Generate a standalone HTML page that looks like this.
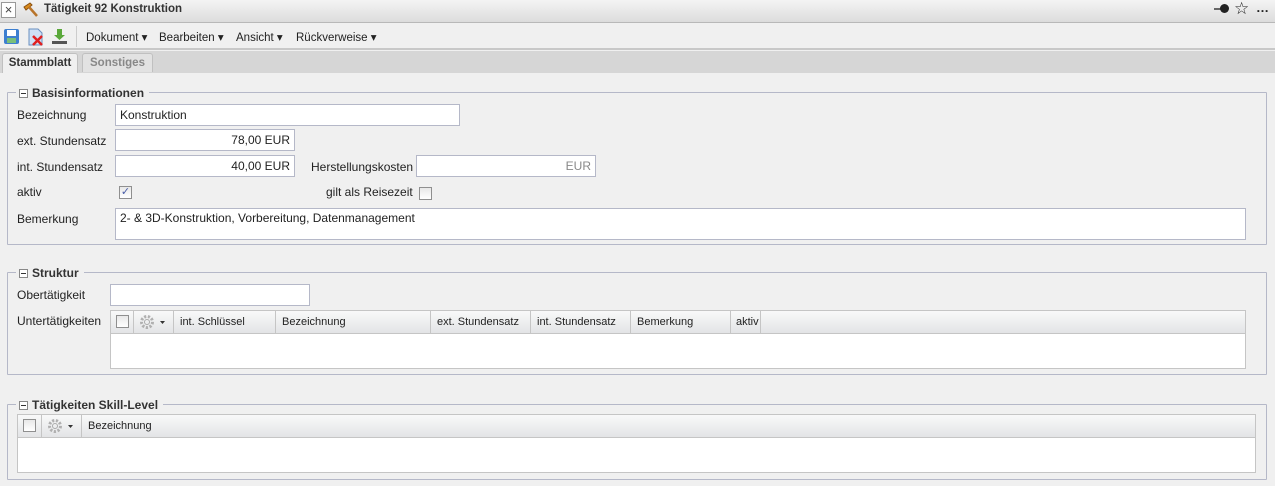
<!DOCTYPE html>
<html><head><meta charset="utf-8"><style>
*{box-sizing:border-box;margin:0;padding:0}
body{width:1275px;height:486px;overflow:hidden;background:#f0f0f0;font-family:"Liberation Sans",sans-serif;font-size:12px;color:#222;position:relative}
.a{position:absolute}
.inp{position:absolute;background:#fff;border:1px solid #b5b8c8;height:22px;padding:3px 4px;font-size:12px}
.r{text-align:right}
.fs{position:absolute;border:1px solid #b5b8c8;border-radius:1px}
.lg{position:absolute;top:-8px;left:8px;background:#f0f0f0;padding:0 5px 0 3px;font-weight:bold;font-size:12px;color:#333;height:16px;line-height:16px}
.lg i{display:inline-block;width:9px;height:9px;border:1px solid #888;vertical-align:-1px;margin-right:4px;position:relative;background:#fff}
.lg i:after{content:"";position:absolute;left:1px;top:3px;width:5px;height:1px;background:#333}
.cb{position:absolute;width:13px;height:13px;border:1px solid #8f8f8f;background:linear-gradient(#e8e8e8,#fff)}
.grid{position:absolute;background:#fff;border:1px solid #c5c5c5}
.gh{position:absolute;left:0;right:0;top:0;height:23px;background:linear-gradient(#f9f9f9,#e3e4e6);border-bottom:1px solid #c5c5c5}
.gh div{position:absolute;top:0;height:22px;line-height:22px;border-right:1px solid #c5c5c5;padding-left:6px;font-size:11px}
.gh svg{position:absolute;left:5px;top:3px}
</style></head><body>
<div class="a" style="left:0;top:0;width:1275px;height:23px;background:linear-gradient(#f4f4f4,#dcdcdc);border-bottom:1px solid #b8b8b8"></div>
<div class="a" style="left:1px;top:2px;width:15px;height:16px;border:1px solid #999;background:#fff;font-size:13px;line-height:13px;text-align:center;color:#444">×</div>
<svg class="a" style="left:21px;top:2px" width="18" height="17"><path d="M3 5 L9 1 L11 3 L5 8Z" fill="#d98a1a" stroke="#8a5010"/><path d="M8 5 L16 14" stroke="#b8742a" stroke-width="2.5"/></svg>
<div class="a" style="left:44px;top:3px;font-weight:bold;font-size:11.5px;color:#333">Tätigkeit 92 Konstruktion</div>
<div class="a" style="left:1214px;top:4px;width:16px;height:10px"><div class="a" style="left:0;top:4px;width:8px;height:2px;background:#666"></div><div class="a" style="left:6px;top:0;width:9px;height:9px;border-radius:50%;background:#222"></div></div>
<div class="a" style="left:1234px;top:-1px;font-size:17px">☆</div>
<div class="a" style="left:1256px;top:0px;font-size:13px;font-weight:bold">…</div>

<div class="a" style="left:0;top:23px;width:1275px;height:27px;background:#f0f0f0;border-bottom:2px solid #c8c8c8"></div>
<svg class="a" style="left:3px;top:28px" width="17" height="17"><rect x="1" y="1" width="15" height="15" rx="2" fill="#3d7fd0"/><rect x="4" y="2" width="9" height="6" fill="#fff"/><rect x="4" y="10" width="9" height="5" fill="#7ac07a"/></svg>
<svg class="a" style="left:27px;top:28px" width="18" height="18"><path d="M2 1h9l4 4v12H2z" fill="#cfe0f5" stroke="#6a8fc0"/><path d="M6 8l9 9M15 8l-9 9" stroke="#e02020" stroke-width="2.5"/></svg>
<svg class="a" style="left:51px;top:28px" width="17" height="17"><path d="M6 1h5v6h3l-5.5 5L3 7h3z" fill="#5aa83a"/><rect x="1" y="13" width="15" height="3" fill="#555"/></svg>
<div class="a" style="left:76px;top:26px;width:1px;height:21px;background:#ccc"></div>
<div class="a" style="left:86px;top:30px;font-size:11.5px">Dokument ▾</div>
<div class="a" style="left:159px;top:30px;font-size:11.5px">Bearbeiten ▾</div>
<div class="a" style="left:236px;top:30px;font-size:11.5px">Ansicht ▾</div>
<div class="a" style="left:296px;top:30px;font-size:11.5px">Rückverweise ▾</div>

<div class="a" style="left:0;top:51px;width:1275px;height:22px;background:#d6d6d6"></div>
<div class="a" style="left:2px;top:53px;width:76px;height:20px;background:#f0f0f0;border:1px solid #c0c0c0;border-bottom:none;border-radius:3px 3px 0 0;font-weight:bold;font-size:11.5px;text-align:center;line-height:18px;color:#333">Stammblatt</div>
<div class="a" style="left:82px;top:53px;width:71px;height:19px;background:#e2e2e2;border:1px solid #c0c0c0;border-bottom:none;border-radius:3px 3px 0 0;font-weight:bold;font-size:11.5px;text-align:center;line-height:18px;color:#888">Sonstiges</div>

<div class="fs" style="left:7px;top:92px;width:1260px;height:153px"><div class="lg"><i></i>Basisinformationen</div></div>
<div class="a" style="left:17px;top:108px">Bezeichnung</div>
<div class="inp" style="left:115px;top:104px;width:345px">Konstruktion</div>
<div class="a" style="left:17px;top:134px">ext. Stundensatz</div>
<div class="inp r" style="left:115px;top:129px;width:180px">78,00 EUR</div>
<div class="a" style="left:17px;top:160px">int. Stundensatz</div>
<div class="inp r" style="left:115px;top:155px;width:180px">40,00 EUR</div>
<div class="a" style="left:311px;top:160px">Herstellungskosten</div>
<div class="inp r" style="left:416px;top:155px;width:180px;color:#888">EUR</div>
<div class="a" style="left:17px;top:185px">aktiv</div>
<div class="cb" style="left:119px;top:186px;color:#4a5ea8;font-size:11px;line-height:11px;text-align:center">✓</div>
<div class="a" style="left:326px;top:185px">gilt als Reisezeit</div>
<div class="cb" style="left:419px;top:187px"></div>
<div class="a" style="left:17px;top:212px">Bemerkung</div>
<div class="inp" style="left:115px;top:208px;width:1131px;height:32px;padding-top:2px">2- &amp; 3D-Konstruktion, Vorbereitung, Datenmanagement</div>

<div class="fs" style="left:7px;top:272px;width:1260px;height:103px"><div class="lg"><i></i>Struktur</div></div>
<div class="a" style="left:17px;top:288px">Obertätigkeit</div>
<div class="inp" style="left:110px;top:284px;width:200px"></div>
<div class="a" style="left:17px;top:314px">Untertätigkeiten</div>
<div class="grid" style="left:110px;top:310px;width:1136px;height:59px"><div class="gh">
<div style="left:0;width:23px"><span class="cb" style="left:5px;top:4px"></span></div>
<div style="left:23px;width:40px"><svg width="30" height="16"><circle cx="8" cy="8" r="5.5" fill="none" stroke="#b0b0b0" stroke-width="3" stroke-dasharray="2.2 1.6"/><circle cx="8" cy="8" r="2.5" fill="none" stroke="#aaa"/><path d="M21 7h5l-2.5 3z" fill="#333"/></svg></div>
<div style="left:63px;width:102px">int. Schlüssel</div>
<div style="left:165px;width:155px">Bezeichnung</div>
<div style="left:320px;width:100px">ext. Stundensatz</div>
<div style="left:420px;width:100px">int. Stundensatz</div>
<div style="left:520px;width:100px">Bemerkung</div>
<div style="left:620px;width:30px;padding-left:5px">aktiv</div>
</div></div>

<div class="fs" style="left:7px;top:404px;width:1260px;height:76px"><div class="lg"><i></i>Tätigkeiten Skill-Level</div></div>
<div class="grid" style="left:17px;top:414px;width:1239px;height:59px"><div class="gh">
<div style="left:0;width:24px"><span class="cb" style="left:5px;top:4px"></span></div>
<div style="left:24px;width:40px"><svg width="30" height="16"><circle cx="8" cy="8" r="5.5" fill="none" stroke="#b0b0b0" stroke-width="3" stroke-dasharray="2.2 1.6"/><circle cx="8" cy="8" r="2.5" fill="none" stroke="#aaa"/><path d="M21 7h5l-2.5 3z" fill="#333"/></svg></div>
<div style="left:64px;right:0;border-right:none">Bezeichnung</div>
</div></div>
</body></html>
